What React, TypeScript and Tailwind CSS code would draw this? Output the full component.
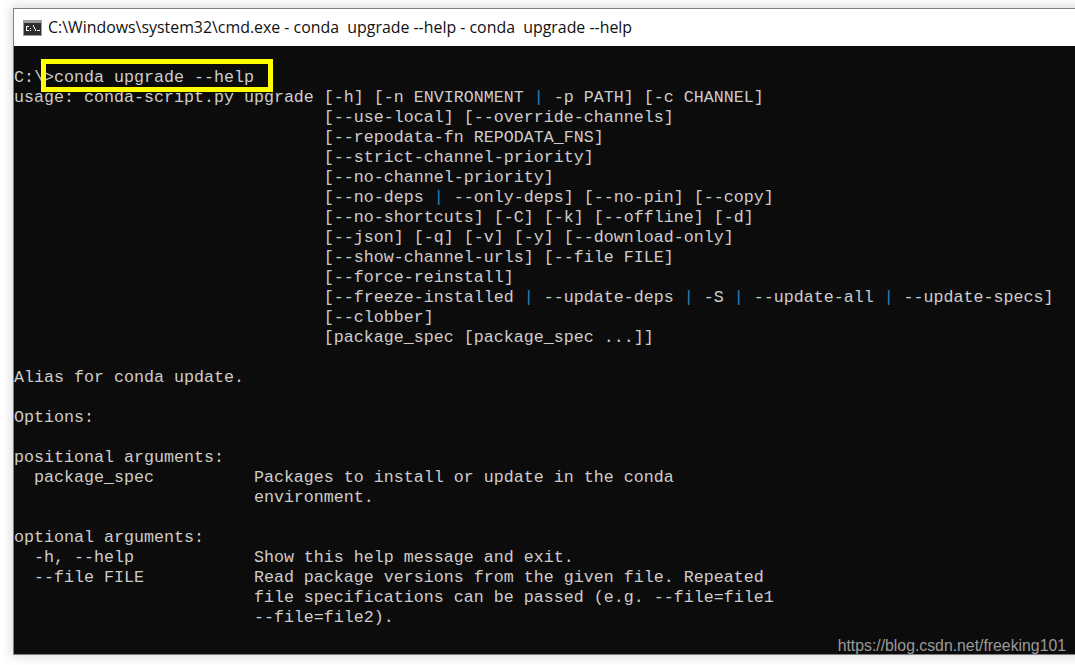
const Pipe = () => <span className="text-[#2f7fb5]">|</span>;

const lines: React.ReactNode[] = [
  "",
  "C:\\>conda upgrade --help",
  <>usage: conda-script.py upgrade [-h] [-n ENVIRONMENT <Pipe /> -p PATH] [-c CHANNEL]</>,
  "                               [--use-local] [--override-channels]",
  "                               [--repodata-fn REPODATA_FNS]",
  "                               [--strict-channel-priority]",
  "                               [--no-channel-priority]",
  <>{"                               [--no-deps "}<Pipe /> --only-deps] [--no-pin] [--copy]</>,
  "                               [--no-shortcuts] [-C] [-k] [--offline] [-d]",
  "                               [--json] [-q] [-v] [-y] [--download-only]",
  "                               [--show-channel-urls] [--file FILE]",
  "                               [--force-reinstall]",
  <>{"                               [--freeze-installed "}<Pipe /> --update-deps <Pipe /> -S <Pipe /> --update-all <Pipe /> --update-specs]</>,
  "                               [--clobber]",
  "                               [package_spec [package_spec ...]]",
  "",
  "Alias for conda update.",
  "",
  "Options:",
  "",
  "positional arguments:",
  "  package_spec          Packages to install or update in the conda",
  "                        environment.",
  "",
  "optional arguments:",
  "  -h, --help            Show this help message and exit.",
  "  --file FILE           Read package versions from the given file. Repeated",
  "                        file specifications can be passed (e.g. --file=file1",
  "                        --file=file2).",
];

export default function App() {
  return (
    <div className="h-[665px] w-[1075px] overflow-hidden bg-white pl-[14px] pt-[9px]">
      <div className="relative h-[645px] w-[1070px] shadow-[0_0_0_1px_rgba(0,0,0,0.45),0_0_10px_3px_rgba(0,0,0,0.14)]">
        <div className="flex h-[37px] items-center gap-[6px] bg-white pl-[9px]">
          <svg width="19" height="16" viewBox="0 0 19 16" className="shrink-0">
            <rect x="0" y="0" width="19" height="16" fill="#9a9a9a" />
            <rect x="1" y="3" width="17" height="12" fill="#2e2e2e" />
            <path d="M3 6h3v1H4v3h2v1H3zM7 8h1v1H7zM7 10h1v1H7zM10 5h1v2h1v2h1v2h-1V9h-1V7h-1zM14 10h3v1h-3z" fill="#fff" />
          </svg>
          <span className="whitespace-pre font-['Open_Sans',sans-serif] text-[15.9px] text-[#111]">
            {"C:\\Windows\\system32\\cmd.exe - conda  upgrade --help - conda  upgrade --help"}
          </span>
        </div>
        <div className="h-[608px] bg-[#0c0c0c] pt-[2px] font-['Liberation_Mono',monospace] text-[16.67px] leading-[20px] text-[#cccccc]">
          {lines.map((line, i) => (
            <div key={i} className="h-5 whitespace-pre">
              {line}
            </div>
          ))}
        </div>
        <div className="absolute left-[27px] top-[50px] h-[33px] w-[232px] border-[5px] border-[#ffff00]" />
        <span className="absolute bottom-[-2px] right-[18px] font-['Liberation_Sans',sans-serif] text-[15.8px] leading-5 text-[#9a9a9a]">
          https://blog.csdn.net/freeking101
        </span>
      </div>
    </div>
  );
}
